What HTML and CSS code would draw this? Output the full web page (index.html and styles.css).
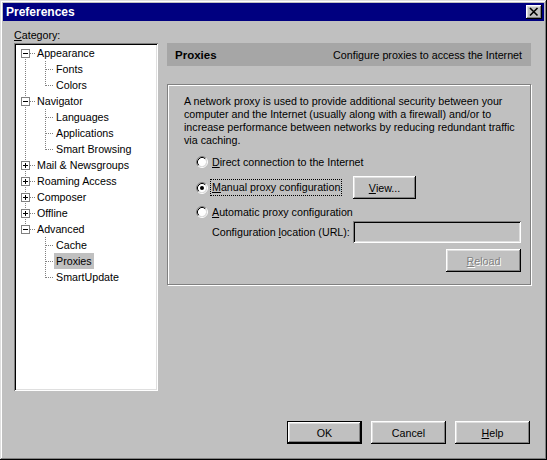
FILE: index.html
```html
<!DOCTYPE html>
<html>
<head>
<meta charset="utf-8">
<title>Preferences</title>
<link rel="stylesheet" href="styles.css">
</head>
<body>
<div class="window">
  <div class="titlebar">
    <span class="title">Preferences</span>
    <span class="close"><svg width="16" height="14" viewBox="0 0 16 14"><path d="M4 3L11.5 10.5M11.5 3L4 10.5" stroke="#000" stroke-width="1.6" fill="none"/></svg></span>
  </div>
  <div class="client">
    <div class="columns">
      <div class="left">
        <div class="cat-label"><u>C</u>ategory:</div>
        <div class="tree">
          <div class="row">
            <svg class="g" width="19" height="16" viewBox="0 0 19 16"><path class="dot" d="M9.5 12V16M14 8.5H19"/><rect x="5.5" y="4.5" width="8" height="8" fill="#fff" stroke="#808080"/><path d="M7 8.5H12" stroke="#000"/></svg>
            <span class="t">Appearance</span>
          </div>
          <div class="row">
            <svg class="g" width="38" height="16" viewBox="0 0 38 16"><path class="dot" d="M9.5 0V16M29.5 0V16M30 8.5H38"/></svg>
            <span class="t">Fonts</span>
          </div>
          <div class="row">
            <svg class="g" width="38" height="16" viewBox="0 0 38 16"><path class="dot" d="M9.5 0V16M29.5 0V9M30 8.5H38"/></svg>
            <span class="t">Colors</span>
          </div>
          <div class="row">
            <svg class="g" width="19" height="16" viewBox="0 0 19 16"><path class="dot" d="M9.5 0V4M9.5 12V16M14 8.5H19"/><rect x="5.5" y="4.5" width="8" height="8" fill="#fff" stroke="#808080"/><path d="M7 8.5H12" stroke="#000"/></svg>
            <span class="t">Navigator</span>
          </div>
          <div class="row">
            <svg class="g" width="38" height="16" viewBox="0 0 38 16"><path class="dot" d="M9.5 0V16M29.5 0V16M30 8.5H38"/></svg>
            <span class="t">Languages</span>
          </div>
          <div class="row">
            <svg class="g" width="38" height="16" viewBox="0 0 38 16"><path class="dot" d="M9.5 0V16M29.5 0V16M30 8.5H38"/></svg>
            <span class="t">Applications</span>
          </div>
          <div class="row">
            <svg class="g" width="38" height="16" viewBox="0 0 38 16"><path class="dot" d="M9.5 0V16M29.5 0V9M30 8.5H38"/></svg>
            <span class="t">Smart Browsing</span>
          </div>
          <div class="row">
            <svg class="g" width="19" height="16" viewBox="0 0 19 16"><path class="dot" d="M9.5 0V4M9.5 12V16M14 8.5H19"/><rect x="5.5" y="4.5" width="8" height="8" fill="#fff" stroke="#808080"/><path d="M7 8.5H12M9.5 6V11" stroke="#000"/></svg>
            <span class="t">Mail &amp; Newsgroups</span>
          </div>
          <div class="row">
            <svg class="g" width="19" height="16" viewBox="0 0 19 16"><path class="dot" d="M9.5 0V4M9.5 12V16M14 8.5H19"/><rect x="5.5" y="4.5" width="8" height="8" fill="#fff" stroke="#808080"/><path d="M7 8.5H12M9.5 6V11" stroke="#000"/></svg>
            <span class="t">Roaming Access</span>
          </div>
          <div class="row">
            <svg class="g" width="19" height="16" viewBox="0 0 19 16"><path class="dot" d="M9.5 0V4M9.5 12V16M14 8.5H19"/><rect x="5.5" y="4.5" width="8" height="8" fill="#fff" stroke="#808080"/><path d="M7 8.5H12M9.5 6V11" stroke="#000"/></svg>
            <span class="t">Composer</span>
          </div>
          <div class="row">
            <svg class="g" width="19" height="16" viewBox="0 0 19 16"><path class="dot" d="M9.5 0V4M9.5 12V16M14 8.5H19"/><rect x="5.5" y="4.5" width="8" height="8" fill="#fff" stroke="#808080"/><path d="M7 8.5H12M9.5 6V11" stroke="#000"/></svg>
            <span class="t">Offline</span>
          </div>
          <div class="row">
            <svg class="g" width="19" height="16" viewBox="0 0 19 16"><path class="dot" d="M9.5 0V4M14 8.5H19"/><rect x="5.5" y="4.5" width="8" height="8" fill="#fff" stroke="#808080"/><path d="M7 8.5H12" stroke="#000"/></svg>
            <span class="t">Advanced</span>
          </div>
          <div class="row">
            <svg class="g" width="38" height="16" viewBox="0 0 38 16"><path class="dot" d="M29.5 0V16M30 8.5H38"/></svg>
            <span class="t">Cache</span>
          </div>
          <div class="row">
            <svg class="g" width="38" height="16" viewBox="0 0 38 16"><path class="dot" d="M29.5 0V16M30 8.5H38"/></svg>
            <span class="t sel">Proxies</span>
          </div>
          <div class="row">
            <svg class="g" width="38" height="16" viewBox="0 0 38 16"><path class="dot" d="M29.5 0V9M30 8.5H38"/></svg>
            <span class="t">SmartUpdate</span>
          </div>
        </div>
      </div>
      <div class="right">
        <div class="header">
          <span class="h-title">Proxies</span>
          <span class="h-desc">Configure proxies to access the Internet</span>
        </div>
        <div class="group">
          <p class="desc">A network proxy is used to provide additional security between your<br>computer and the Internet (usually along with a firewall) and/or to<br>increase performance between networks by reducing redundant traffic<br>via caching.</p>
          <div class="opt opt-direct">
            <span class="slot"><svg width="12" height="12" viewBox="0 0 12 12"><circle cx="6" cy="6" r="4.2" fill="#fff"/><path d="M2.11 9.89A5.5 5.5 0 0 1 9.89 2.11" stroke="#808080" fill="none"/><path d="M9.89 2.11A5.5 5.5 0 0 1 2.11 9.89" stroke="#fff" fill="none"/><path d="M2.82 9.18A4.5 4.5 0 0 1 9.18 2.82" stroke="#000" fill="none"/><path d="M9.18 2.82A4.5 4.5 0 0 1 2.82 9.18" stroke="#dfdfdf" fill="none"/></svg></span>
            <span class="lbl"><u>D</u>irect connection to the Internet</span>
          </div>
          <div class="opt opt-manual">
            <span class="slot"><svg width="12" height="12" viewBox="0 0 12 12"><circle cx="6" cy="6" r="4.2" fill="#fff"/><path d="M2.11 9.89A5.5 5.5 0 0 1 9.89 2.11" stroke="#808080" fill="none"/><path d="M9.89 2.11A5.5 5.5 0 0 1 2.11 9.89" stroke="#fff" fill="none"/><path d="M2.82 9.18A4.5 4.5 0 0 1 9.18 2.82" stroke="#000" fill="none"/><path d="M9.18 2.82A4.5 4.5 0 0 1 2.82 9.18" stroke="#dfdfdf" fill="none"/><circle cx="6" cy="6" r="2" fill="#000"/></svg></span>
            <span class="cell"><span class="lbl focus"><u>M</u>anual proxy configuration</span></span>
            <span class="btn btn-view"><u>V</u>iew...</span>
          </div>
          <div class="opt opt-auto">
            <span class="slot"><svg width="12" height="12" viewBox="0 0 12 12"><circle cx="6" cy="6" r="4.2" fill="#fff"/><path d="M2.11 9.89A5.5 5.5 0 0 1 9.89 2.11" stroke="#808080" fill="none"/><path d="M9.89 2.11A5.5 5.5 0 0 1 2.11 9.89" stroke="#fff" fill="none"/><path d="M2.82 9.18A4.5 4.5 0 0 1 9.18 2.82" stroke="#000" fill="none"/><path d="M9.18 2.82A4.5 4.5 0 0 1 2.82 9.18" stroke="#dfdfdf" fill="none"/></svg></span>
            <span class="lbl"><u>A</u>utomatic proxy configuration</span>
          </div>
          <div class="opt opt-url">
            <span class="slot"></span>
            <span class="cell">Configuration <u>l</u>ocation (URL):</span>
            <span class="input"></span>
          </div>
          <div class="opt opt-reload">
            <span class="btn btn-disabled"><u>R</u>eload</span>
          </div>
        </div>
      </div>
    </div>
    <div class="footer">
      <span class="btn btn-default">OK</span>
      <span class="btn">Cancel</span>
      <span class="btn"><u>H</u>elp</span>
    </div>
  </div>
</div>
</body>
</html>
```
FILE: styles.css
```css
* { box-sizing: border-box; }
html, body { margin: 0; padding: 0; }
body {
  width: 547px;
  height: 460px;
  overflow: hidden;
  background: #c0c0c0;
  color: #000;
  font-family: "Liberation Sans", Arial, sans-serif;
  font-size: 10.7px;
}
.window {
  width: 547px;
  height: 460px;
  padding: 3px;
  display: flex;
  flex-direction: column;
  box-shadow: inset -1px -1px #000, inset 1px 1px #dfdfdf, inset -2px -2px #808080, inset 2px 2px #fff;
}
.titlebar {
  height: 18px;
  background: #000080;
  display: flex;
  align-items: center;
  justify-content: space-between;
  padding: 0 2px 0 3px;
}
.title {
  color: #fff;
  font-weight: bold;
  font-size: 12px;
}
.close {
  width: 16px;
  height: 14px;
  background: #c0c0c0;
  box-shadow: inset -1px -1px #000, inset 1px 1px #fff, inset -2px -2px #808080, inset 2px 2px #dfdfdf;
}
.close svg { display: block; }
.client {
  flex: 1;
  display: flex;
  flex-direction: column;
  padding-left: 11px;
}
.columns {
  display: grid;
  grid-template-columns: 144px 364px;
  column-gap: 9px;
}
.cat-label {
  height: 22px;
  padding-top: 8px;
  line-height: 13px;
}
.tree {
  height: 348px;
  background: #fff;
  padding: 2px;
  box-shadow: inset 1px 1px #808080, inset -1px -1px #fff, inset 2px 2px #000, inset -2px -2px #dfdfdf;
}
.row {
  display: flex;
  align-items: center;
  height: 16px;
}
.g { display: block; flex: none; }
.dot {
  stroke: #808080;
  stroke-dasharray: 1 1;
  fill: none;
}
.t {
  padding: 0 2px;
  line-height: 16px;
  white-space: nowrap;
}
.t.sel { background: #c0c0c0; }
.right { padding-top: 22px; }
.header {
  height: 23px;
  background: #a6a6a6;
  display: flex;
  align-items: center;
  justify-content: space-between;
  padding: 0 9px 0 8px;
  white-space: nowrap;
}
.h-title {
  font-weight: bold;
  font-size: 11.5px;
}
.group {
  margin-top: 18px;
  height: 201px;
  border: 1px solid #808080;
  box-shadow: inset 1px 1px #fff, 1px 1px #fff;
  padding: 10px 9px 0 16px;
}
.desc {
  margin: 0;
  line-height: 13px;
  white-space: nowrap;
}
.opt {
  display: flex;
  align-items: center;
  margin-left: 12px;
  white-space: nowrap;
}
.opt-direct { margin-top: 7px; height: 16px; }
.opt-manual { margin-top: 6px; height: 23px; }
.opt-auto { margin-top: 5px; height: 16px; }
.opt-url { margin-top: 1px; height: 22px; }
.opt-reload { margin-top: 6px; height: 23px; justify-content: flex-end; }
.slot {
  width: 16px;
  flex: none;
  display: flex;
  align-items: center;
}
.slot svg { display: block; }
.cell {
  width: 141px;
  flex: none;
}
.lbl { line-height: 13px; }
.focus {
  display: inline-block;
  margin-left: -2px;
  padding: 1px;
  border: 1px dotted #000;
}
.input {
  width: 168px;
  height: 22px;
  background: #c0c0c0;
  box-shadow: inset 1px 1px #808080, inset -1px -1px #fff, inset 2px 2px #000, inset -2px -2px #dfdfdf;
}
.btn {
  width: 75px;
  height: 23px;
  flex: none;
  display: flex;
  align-items: center;
  justify-content: center;
  background: #c0c0c0;
  box-shadow: inset -1px -1px #000, inset 1px 1px #fff, inset -2px -2px #808080, inset 2px 2px #dfdfdf;
}
.btn-view { width: 63px; }
.btn-disabled {
  color: #808080;
  text-shadow: 1px 1px 0 #fff;
}
.btn-default {
  box-shadow: inset 0 0 0 1px #000, inset -2px -2px #000, inset 2px 2px #fff, inset -3px -3px #808080, inset 3px 3px #dfdfdf;
}
.footer {
  display: flex;
  justify-content: flex-end;
  gap: 9px;
  margin-top: 30px;
  padding-right: 14px;
}
```
